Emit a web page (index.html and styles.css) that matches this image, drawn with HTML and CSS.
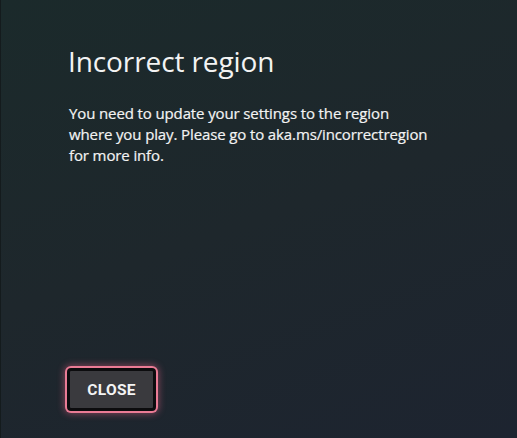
FILE: index.html
```html
<!DOCTYPE html>
<html lang="en">
<head>
<meta charset="utf-8">
<title>Incorrect region</title>
<link rel="stylesheet" href="styles.css">
</head>
<body>
<main class="dialog">
  <h1 class="title">Incorrect region</h1>
  <p class="message">You need to update your settings to the region where you play. Please go to aka.ms/incorrectregion for more info.</p>
  <div class="spacer"></div>
  <div class="actions">
    <button class="btn" type="button">CLOSE</button>
  </div>
</main>
</body>
</html>
```
FILE: styles.css
```css
html, body {
  margin: 0;
  padding: 0;
  height: 100%;
}
body {
  background: linear-gradient(160deg, #1b2a2b 0%, #1e272c 50%, #1d2430 100%);
  color: #f3f3f3;
  font-family: "Open Sans", "Noto Sans", sans-serif;
  overflow: hidden;
}
.dialog {
  box-sizing: border-box;
  height: 438px;
  display: flex;
  flex-direction: column;
  padding: 44px 0 27px 67px;
  border-left: 1px solid #141b1d;
}
.title {
  margin: 0;
  font-size: 28px;
  line-height: 34px;
  font-weight: 400;
  letter-spacing: -0.1px;
}
.message {
  margin: 25px 0 0 1px;
  max-width: 362px;
  font-size: 15px;
  line-height: 21px;
  letter-spacing: -0.12px;
  -webkit-text-stroke: 0.2px #f3f3f3;
}
.spacer {
  flex: 1;
}
.actions {
  display: flex;
}
.btn {
  margin-left: -1px;
  width: 89px;
  height: 43px;
  border: 3px solid #0c0c0e;
  border-radius: 4px;
  background: #3a3a3e;
  color: #f4f4f4;
  font-family: Roboto, "Liberation Sans", sans-serif;
  font-weight: 700;
  font-size: 15.5px;
  letter-spacing: 0.3px;
  box-shadow: 0 0 0 2px #ea7b95, 0 0 7px 3px rgba(235, 100, 135, 0.45);
  padding: 0;
}
```
